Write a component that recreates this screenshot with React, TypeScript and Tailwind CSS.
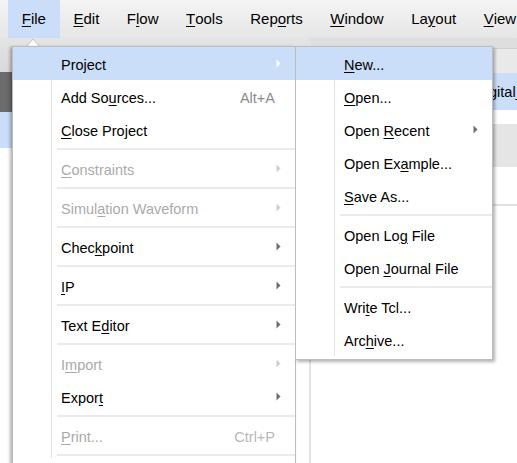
import type React from "react";

type Item =
  | { sep: true }
  | {
      label: string;
      disabled?: boolean;
      arrow?: boolean;
      shortcut?: string;
      active?: boolean;
    };

const menuBar = ["&File", "&Edit", "F&low", "&Tools", "Rep&orts", "&Window", "La&yout", "&View"];

const fileItems: Item[] = [
  { label: "Project", arrow: true, active: true },
  { label: "Add So&urces...", shortcut: "Alt+A" },
  { label: "&Close Project" },
  { sep: true },
  { label: "&Constraints", arrow: true, disabled: true },
  { sep: true },
  { label: "Simul&ation Waveform", arrow: true, disabled: true },
  { sep: true },
  { label: "Chec&kpoint", arrow: true },
  { sep: true },
  { label: "&IP", arrow: true },
  { sep: true },
  { label: "Text E&ditor", arrow: true },
  { sep: true },
  { label: "I&mport", arrow: true, disabled: true },
  { label: "Expor&t", arrow: true },
  { sep: true },
  { label: "&Print...", shortcut: "Ctrl+P", disabled: true },
  { sep: true },
];

const projectItems: Item[] = [
  { label: "&New...", active: true },
  { label: "&Open..." },
  { label: "Open &Recent", arrow: true },
  { label: "Open Ex&ample..." },
  { label: "&Save As..." },
  { sep: true },
  { label: "Open Lo&g File" },
  { label: "Open &Journal File" },
  { sep: true },
  { label: "Wri&te Tcl..." },
  { label: "Arc&hive..." },
];

const Label = ({ text }: { text: string }) => {
  const i = text.indexOf("&");
  if (i < 0) return <>{text}</>;
  return (
    <>
      {text.slice(0, i)}
      <span className="underline decoration-1 underline-offset-[2px]">{text[i + 1]}</span>
      {text.slice(i + 2)}
    </>
  );
};

const Arrow = ({ color }: { color: string }) => (
  <svg width="5" height="9" viewBox="0 0 5 9">
    <path d="M0.5 0.5 L4.5 4.5 L0.5 8.5 Z" fill={color} />
  </svg>
);

const MenuRows: React.FC<{ items: Item[] }> = ({ items }) => (
  <>
    {items.map((it, idx) => {
      if ("sep" in it) {
        return (
          <div key={idx} className="flex h-[6px]">
            <div className="w-[39px] border-r border-[#e3e3e3]" />
            <div className="flex flex-1 items-center pl-[5px]">
              <div className="h-[2px] w-full bg-[#ebebeb]" />
            </div>
          </div>
        );
      }
      const arrowColor = it.active ? "#ffffff" : it.disabled ? "#cfcfcf" : "#6e6e6e";
      return (
        <div key={idx} className={`flex h-[33px] items-center ${it.active ? "bg-[#cbdef9]" : ""}`}>
          <div className={`h-full w-[39px] border-r ${it.active ? "border-transparent" : "border-[#e3e3e3]"}`} />
          <div className={`flex-1 pl-[9px] pt-[4px] ${it.disabled ? "text-[#aaaaaa]" : "text-black"}`}>
            <Label text={it.label} />
          </div>
          {it.shortcut && (
            <div className={`mr-[1px] pt-[4px] ${it.disabled ? "text-[#b8b8b8]" : "text-[#8c8c8c]"}`}>
              {it.shortcut}
            </div>
          )}
          <div className="flex w-[5px] items-center">{it.arrow && <Arrow color={arrowColor} />}</div>
          <div className="w-[14px]" />
        </div>
      );
    })}
  </>
);

export default function App() {
  return (
    <div className="relative h-[463px] w-[517px] overflow-hidden bg-white font-['Liberation_Sans',Arial,sans-serif] text-[14.5px]">
      {/* menu bar */}
      <div className="flex h-[38px] items-center bg-gradient-to-b from-[#f4f4f4] to-[#e6e6e6] pl-[8px] text-[15px] text-black">
        {menuBar.map((m, i) => (
          <div
            key={m}
            className={`flex h-full shrink-0 items-center px-[13.75px] ${i === 0 ? "bg-[#cbdef9]" : ""}`}
          >
            <Label text={m} />
          </div>
        ))}
      </div>

      {/* workspace behind the menus */}
      <div className="flex h-[425px]">
        <div className="flex w-[309px] shrink-0 flex-col">
          <div className="h-[34px] bg-gradient-to-b from-[#e4e4e4] to-[#d9d9d9]" />
          <div className="h-[40px] bg-[#6b6b6b]" />
          <div className="h-[36px] bg-[#cbdef9]" />
          <div className="flex-1 bg-white" />
        </div>
        <div className="w-[2px] shrink-0 bg-[#e2e2e2]" />
        <div className="flex min-w-0 flex-1 flex-col overflow-hidden">
          <div className="h-[10px] bg-[#dedede]" />
          <div className="h-[25px] border-t border-[#d0d0d0] bg-[#e9e9e9]" />
          <div className="flex h-[37px] items-center whitespace-nowrap bg-[#cbdef9] pl-[178px] pt-[2px] text-black">
            gital_
          </div>
          <div className="h-[14px] bg-white" />
          <div className="h-[43px] bg-[#e5e5e5]" />
          <div className="h-[37px] bg-white" />
          <div className="h-[2px] bg-[#e2e2e2]" />
          <div className="flex-1 bg-white" />
        </div>
      </div>

      {/* notch above File menu */}
      <svg className="absolute left-[26px] top-[37px]" width="14" height="10" viewBox="0 0 14 10">
        <path d="M0.5 9.5 L7 2 L13.5 9.5 Z" fill="#ffffff" stroke="#c4c4c4" />
      </svg>

      {/* File menu */}
      <div className="absolute left-[12px] top-[46px] h-[430px] w-[284px] border border-[#bdbdbd] bg-white shadow-[-2px_1px_3px_rgba(0,0,0,0.3)]">
        <MenuRows items={fileItems} />
      </div>

      {/* Project submenu */}
      <div className="absolute left-[295px] top-[46px] w-[198px] border border-[#bdbdbd] bg-white pb-[3px] shadow-[2px_2px_3px_rgba(0,0,0,0.3)]">
        <MenuRows items={projectItems} />
      </div>
    </div>
  );
}
